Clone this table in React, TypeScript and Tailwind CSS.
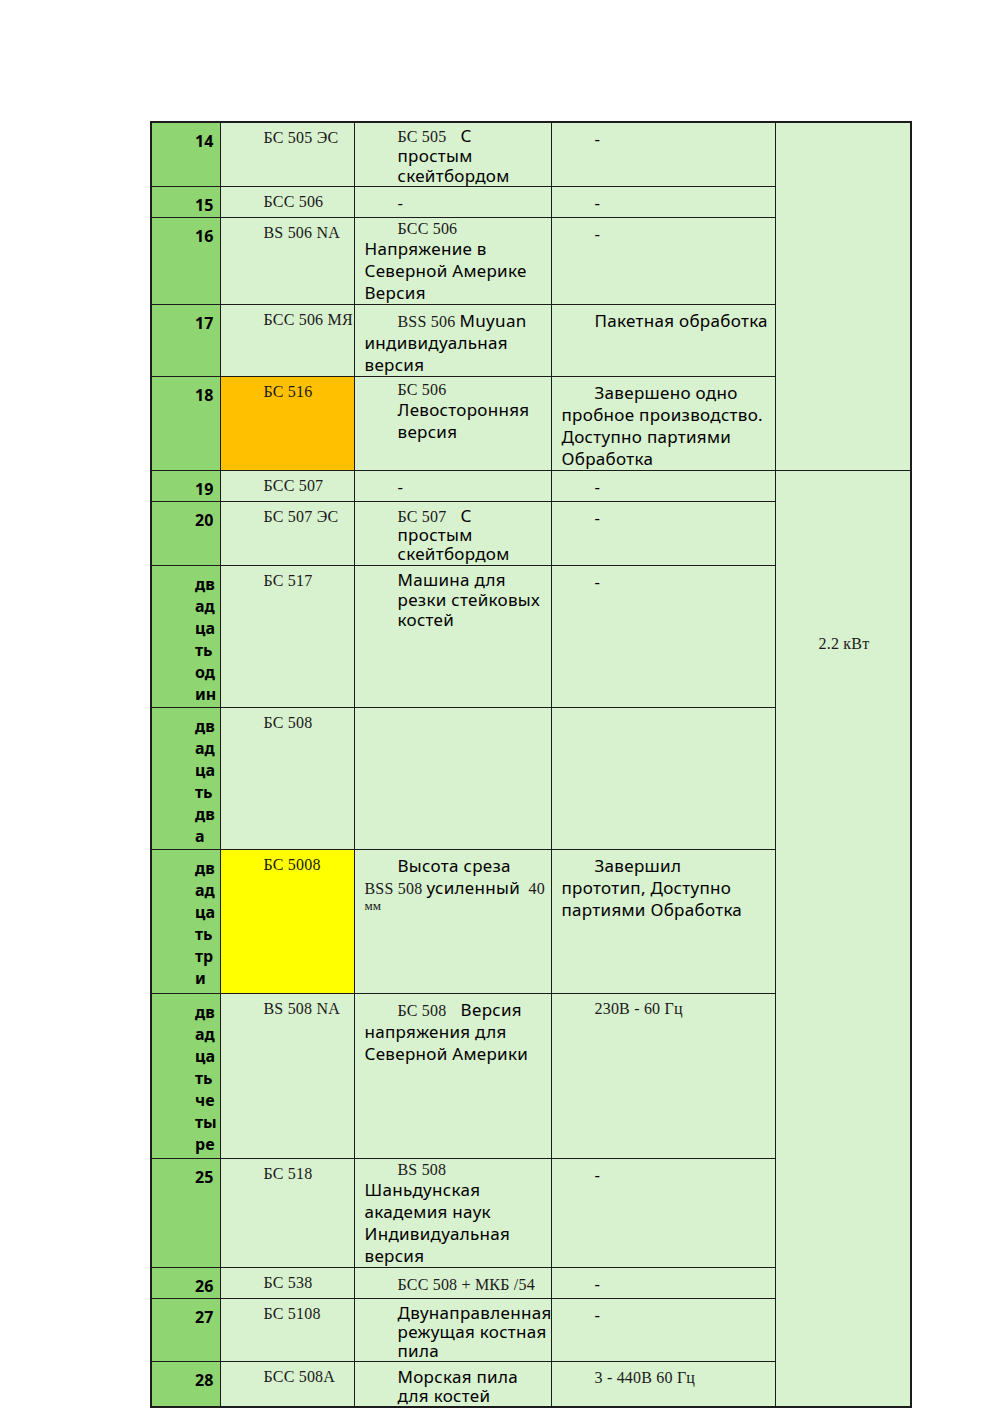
import React from "react";

const serif = "font-['Liberation_Serif',serif] text-[16px] tracking-[0.2px] text-[#1a1a1a]";
const sans = "font-['Noto_Sans',sans-serif] text-[17px] tracking-[0.3px] text-black";

function R({ children }: { children: React.ReactNode }) {
  return <span className={serif}>{children}</span>;
}
function S({ children }: { children: React.ReactNode }) {
  return <span className={sans}>{children}</span>;
}

function L({ i, h = 20, children }: { i?: boolean; h?: number; children: React.ReactNode }) {
  const lh =
    h === 22 ? "leading-[22px] h-[22px]" : h === 19 ? "leading-[19px] h-[19px]" : "leading-[20px] h-[20px]";
  return (
    <div className={`${i ? "pl-[43px]" : "pl-[10px]"} ${lh} whitespace-pre text-[15px] font-['Noto_Sans',sans-serif]`}>
      {children}
    </div>
  );
}

const td = "border border-[#1c1c1c] align-top p-0 overflow-hidden";
const light = "bg-[#d8f1ce]";

function Num({ parts }: { parts: string[] }) {
  return (
    <td className={`${td} bg-[#8fd673] pt-[7px]`}>
      <div className="pl-[43px] font-['Noto_Sans',sans-serif] font-bold text-[16px] leading-[22px] text-black">
        {parts.map((p, k) => (
          <div key={k} className="h-[22px]">
            {p}
          </div>
        ))}
      </div>
    </td>
  );
}

function Model({ name, bg = light }: { name: string; bg?: string }) {
  return (
    <td className={`${td} ${bg} pt-[4px]`}>
      <L i>
        <R>{name}</R>
      </L>
    </td>
  );
}

function Dash() {
  return (
    <td className={`${td} ${light} pt-[6px]`}>
      <L i>
        <S>-</S>
      </L>
    </td>
  );
}

export default function App() {
  return (
    <div className="bg-white min-h-[1414px] pt-[121px] pl-[150px]">
      <table className="table-fixed border-collapse w-[760px] border-2 border-[#1c1c1c]">
        <colgroup>
          <col className="w-[69px]" />
          <col className="w-[134px]" />
          <col className="w-[197px]" />
          <col className="w-[224px]" />
          <col className="w-[136px]" />
        </colgroup>
        <tbody>
          <tr className="h-[64px]">
            <Num parts={["14"]} />
            <Model name="БС 505 ЭС" />
            <td className={`${td} ${light} pt-[3px]`}>
              <L i>
                <R>БС 505</R>
                <S>{"   С"}</S>
              </L>
              <L i>
                <S>простым</S>
              </L>
              <L i>
                <S>скейтбордом</S>
              </L>
            </td>
            <Dash />
            <td rowSpan={5} className={`${td} ${light}`}></td>
          </tr>
          <tr className="h-[31px]">
            <Num parts={["15"]} />
            <Model name="БСС 506" />
            <td className={`${td} ${light} pt-[6px]`}>
              <L i>
                <S>-</S>
              </L>
            </td>
            <Dash />
          </tr>
          <tr className="h-[87px]">
            <Num parts={["16"]} />
            <Model name="BS 506 NA" />
            <td className={`${td} ${light} pt-[0px]`}>
              <L i>
                <R>БСС 506</R>
              </L>
              <L h={22}>
                <S>Напряжение в</S>
              </L>
              <L h={22}>
                <S>Северной Америке</S>
              </L>
              <L h={22}>
                <S>Версия</S>
              </L>
            </td>
            <Dash />
          </tr>
          <tr className="h-[72px]">
            <Num parts={["17"]} />
            <Model name="БСС 506 МЯ" />
            <td className={`${td} ${light} pt-[5px]`}>
              <L i h={22}>
                <R>BSS 506 </R>
                <S>Muyuan</S>
              </L>
              <L h={22}>
                <S>индивидуальная</S>
              </L>
              <L h={22}>
                <S>версия</S>
              </L>
            </td>
            <td className={`${td} ${light} pt-[5px]`}>
              <L i h={22}>
                <S>Пакетная обработка</S>
              </L>
            </td>
          </tr>
          <tr className="h-[94px]">
            <Num parts={["18"]} />
            <Model name="БС 516" bg="bg-[#ffc000]" />
            <td className={`${td} ${light} pt-[2px]`}>
              <L i>
                <R>БС 506</R>
              </L>
              <L i h={22}>
                <S>Левосторонняя</S>
              </L>
              <L i h={22}>
                <S>версия</S>
              </L>
            </td>
            <td className={`${td} ${light} pt-[5px]`}>
              <L i h={22}>
                <S>Завершено одно</S>
              </L>
              <L h={22}>
                <S>пробное производство.</S>
              </L>
              <L h={22}>
                <S>Доступно партиями</S>
              </L>
              <L h={22}>
                <S>Обработка</S>
              </L>
            </td>
          </tr>
          <tr className="h-[31px]">
            <Num parts={["19"]} />
            <Model name="БСС 507" />
            <td className={`${td} ${light} pt-[6px]`}>
              <L i>
                <S>-</S>
              </L>
            </td>
            <Dash />
            <td rowSpan={10} className={`${td} ${light} pt-[162px]`}>
              <L i>
                <R>2.2 кВт</R>
              </L>
            </td>
          </tr>
          <tr className="h-[64px]">
            <Num parts={["20"]} />
            <Model name="БС 507 ЭС" />
            <td className={`${td} ${light} pt-[4px]`}>
              <L i h={19}>
                <R>БС 507</R>
                <S>{"   С"}</S>
              </L>
              <L i h={19}>
                <S>простым</S>
              </L>
              <L i h={19}>
                <S>скейтбордом</S>
              </L>
            </td>
            <Dash />
          </tr>
          <tr className="h-[142px]">
            <Num parts={["дв", "ад", "ца", "ть", "од", "ин"]} />
            <Model name="БС 517" />
            <td className={`${td} ${light} pt-[4px]`}>
              <L i>
                <S>Машина для</S>
              </L>
              <L i>
                <S>резки стейковых</S>
              </L>
              <L i>
                <S>костей</S>
              </L>
            </td>
            <Dash />
          </tr>
          <tr className="h-[142px]">
            <Num parts={["дв", "ад", "ца", "ть", "дв", "а"]} />
            <Model name="БС 508" />
            <td className={`${td} ${light}`}></td>
            <td className={`${td} ${light}`}></td>
          </tr>
          <tr className="h-[144px]">
            <Num parts={["дв", "ад", "ца", "ть", "тр", "и"]} />
            <Model name="БС 5008" bg="bg-[#ffff00]" />
            <td className={`${td} ${light} pt-[5px]`}>
              <L i h={22}>
                <S>Высота среза</S>
              </L>
              <L h={22}>
                <R>BSS 508 </R>
                <S>усиленный</S>
                <R>{"  40"}</R>
              </L>
              <div className="pl-[10px] h-[14px] leading-[14px] font-['Liberation_Serif',serif] text-[13px] text-[#1a1a1a]">мм</div>
            </td>
            <td className={`${td} ${light} pt-[5px]`}>
              <L i h={22}>
                <S>Завершил</S>
              </L>
              <L h={22}>
                <S>прототип, Доступно</S>
              </L>
              <L h={22}>
                <S>партиями Обработка</S>
              </L>
            </td>
          </tr>
          <tr className="h-[165px]">
            <Num parts={["дв", "ад", "ца", "ть", "че", "ты", "ре"]} />
            <Model name="BS 508 NA" />
            <td className={`${td} ${light} pt-[5px]`}>
              <L i h={22}>
                <R>БС 508</R>
                <S>{"   Версия"}</S>
              </L>
              <L h={22}>
                <S>напряжения для</S>
              </L>
              <L h={22}>
                <S>Северной Америки</S>
              </L>
            </td>
            <td className={`${td} ${light} pt-[4px]`}>
              <L i>
                <R>230В - 60 Гц</R>
              </L>
            </td>
          </tr>
          <tr className="h-[109px]">
            <Num parts={["25"]} />
            <Model name="БС 518" />
            <td className={`${td} ${light} pt-[0px]`}>
              <L i>
                <R>BS 508</R>
              </L>
              <L h={22}>
                <S>Шаньдунская</S>
              </L>
              <L h={22}>
                <S>академия наук</S>
              </L>
              <L h={22}>
                <S>Индивидуальная</S>
              </L>
              <L h={22}>
                <S>версия</S>
              </L>
            </td>
            <Dash />
          </tr>
          <tr className="h-[31px]">
            <Num parts={["26"]} />
            <Model name="БС 538" />
            <td className={`${td} ${light} pt-[6px]`}>
              <L i>
                <R>БСС 508 + МКБ /54</R>
              </L>
            </td>
            <Dash />
          </tr>
          <tr className="h-[63px]">
            <Num parts={["27"]} />
            <Model name="БС 5108" />
            <td className={`${td} ${light} pt-[4px]`}>
              <L i h={19}>
                <S>Двунаправленная</S>
              </L>
              <L i h={19}>
                <S>режущая костная</S>
              </L>
              <L i h={19}>
                <S>пила</S>
              </L>
            </td>
            <Dash />
          </tr>
          <tr className="h-[45px]">
            <Num parts={["28"]} />
            <Model name="БСС 508А" />
            <td className={`${td} ${light} pt-[5px]`}>
              <L i h={19}>
                <S>Морская пила</S>
              </L>
              <L i h={19}>
                <S>для костей</S>
              </L>
            </td>
            <td className={`${td} ${light} pt-[5px]`}>
              <L i>
                <R>3 - 440В 60 Гц</R>
              </L>
            </td>
          </tr>
        </tbody>
      </table>
    </div>
  );
}
